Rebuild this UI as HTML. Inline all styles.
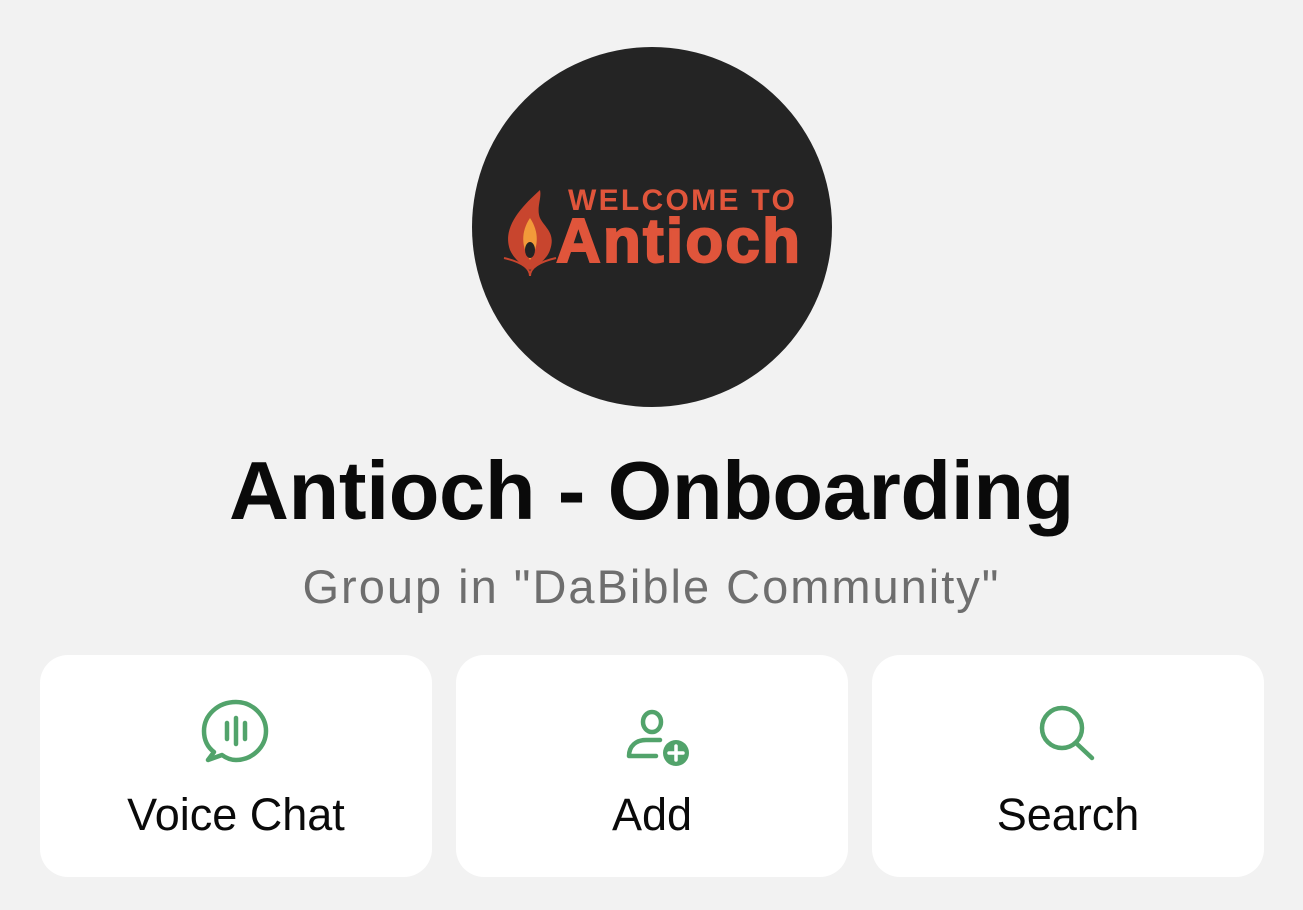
<!DOCTYPE html>
<html><head><style>
body{margin:0;width:1303px;height:910px;background:#f2f2f2;font-family:"Liberation Sans",sans-serif;position:relative;overflow:hidden}
.circle{position:absolute;left:472px;top:47px;width:360px;height:360px;border-radius:50%;background:#242424}
.w{position:absolute;left:568px;top:184px;font-size:30px;font-weight:bold;color:#e0553b;letter-spacing:2.3px;white-space:nowrap}
.a{position:absolute;left:556px;top:206px;font-size:62px;font-weight:900;color:#e0553b;letter-spacing:2.2px;white-space:nowrap;-webkit-text-stroke:2px #e0553b}
h1{position:absolute;left:0;width:1303px;top:443px;margin:0;text-align:center;font-size:83px;font-weight:bold;color:#0a0a0a;letter-spacing:-0.4px}
.sub{position:absolute;left:0;width:1303px;top:559px;text-align:center;font-size:47px;color:#6e6e6e;letter-spacing:2px}
.card{position:absolute;top:655px;width:392px;height:222px;background:#fff;border-radius:28px}
.lbl{position:absolute;top:789px;text-align:center;width:392px;font-size:45px;color:#0a0a0a}
svg{position:absolute}
</style></head><body>
<div class="circle"></div>
<svg style="left:500px;top:188px" width="60" height="90" viewBox="0 0 60 90">
<path d="M40 2 C20 20 2 40 10 62 C16 75 28 80 30 82 C32 80 46 74 50 62 C56 45 45 40 40 30 C36 20 42 10 40 2Z" fill="#c8452e"/>
<path d="M30 30 C20 45 22 60 30 72 C38 60 40 45 30 30Z" fill="#f29a3a"/>
<ellipse cx="30" cy="62" rx="5" ry="8" fill="#242424"/>
<path d="M4 70 Q30 76 30 88 Q30 76 56 70" stroke="#c8452e" stroke-width="2" fill="none"/>
</svg>
<div class="w">WELCOME TO</div>
<div class="a">Antioch</div>
<h1>Antioch - Onboarding</h1>
<div class="sub">Group in "DaBible Community"</div>
<div class="card" style="left:40px"></div>
<div class="card" style="left:456px"></div>
<div class="card" style="left:872px"></div>
<div class="lbl" style="left:40px">Voice Chat</div>
<div class="lbl" style="left:456px">Add</div>
<div class="lbl" style="left:872px">Search</div>
<svg style="left:200px;top:698px" width="72" height="68" viewBox="0 0 72 68" fill="none" stroke="#52a36b" stroke-width="4.5" stroke-linecap="round">
<path d="M14 54 C6 48 4 40 4 33 C4 17 18 4 36 4 C52 4 66 17 66 33 C66 49 52 62 36 62 C30 62 26 60 22 57 L8 62 Z" stroke-linejoin="round"/>
<path d="M27 25V41M36 20V46M45 25V41"/>
</svg>
<svg style="left:622px;top:704px" width="72" height="66" viewBox="0 0 72 66" fill="none" stroke="#52a36b" stroke-width="4.5" stroke-linecap="round">
<ellipse cx="30" cy="18" rx="9" ry="10"/>
<path d="M7 52 C7 42 14 36 24 36 H38 M7 52 H34"/>
<circle cx="54" cy="49" r="13" fill="#52a36b" stroke="none"/>
<path d="M54 42V56M47 49H61" stroke="#fff" stroke-width="3.5"/>
</svg>
<svg style="left:1036px;top:702px" width="64" height="62" viewBox="0 0 64 62" fill="none" stroke="#52a36b" stroke-width="4.5" stroke-linecap="round">
<circle cx="26" cy="26" r="20"/>
<path d="M40 41L56 56"/>
</svg>
</body></html>
